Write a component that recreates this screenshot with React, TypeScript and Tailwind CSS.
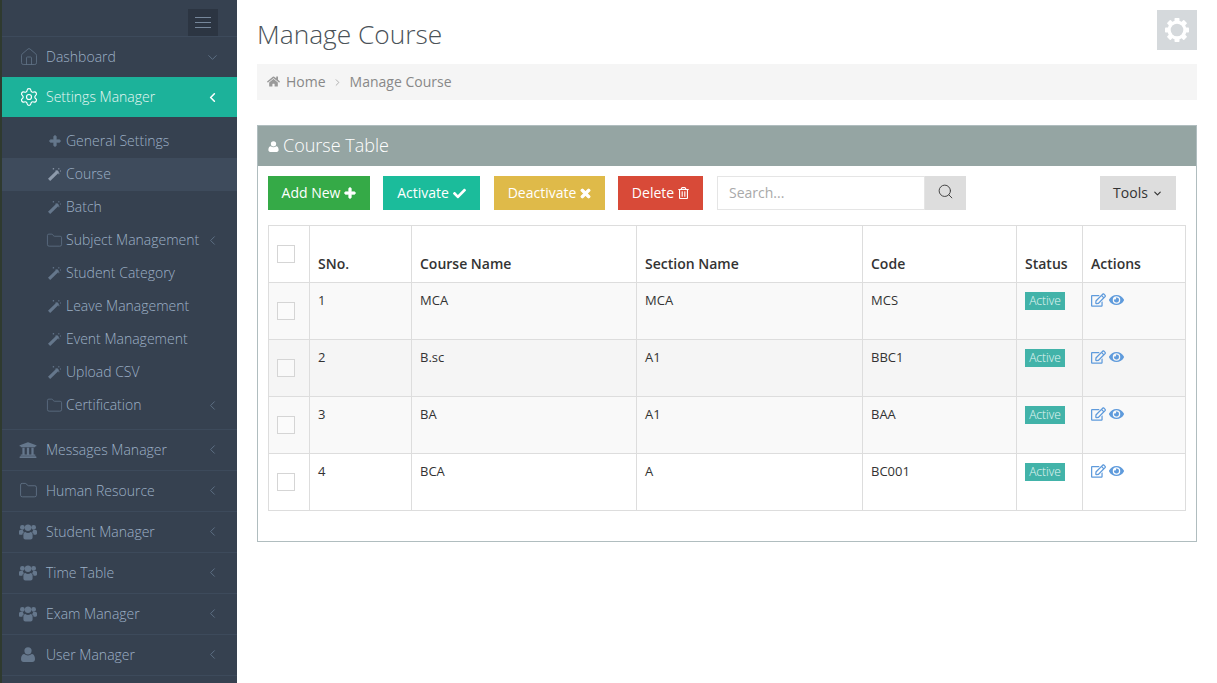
import { ChevronDown, ChevronLeft, ChevronRight, Folder, Home, Search, Settings } from 'lucide-react'
import { FaCheck, FaEye, FaHome, FaPlus, FaRegEdit, FaRegTrashAlt, FaTimes, FaUniversity } from 'react-icons/fa'

function WandIcon({ className }: { className?: string }) {
    return (
        <svg viewBox="0 0 13 13" className={className} fill="currentColor">
            <path d="M0 10.800 9 2 11.200 4.200 2.200 13z" />
            <path d="M10.400 0h.9v1.400h-.9zM10.400 5h.9v1.200h-.9zM12 2.600h1v.9h-1zM7.400 2.600h1.100v.9H7.400zM5 0h.8v1.600H5zM4.600.4h1.600v.8H4.600z" />
        </svg>
    )
}

function GroupIcon({ className }: { className?: string }) {
    return (
        <svg viewBox="0 0 18 16" className={className} fill="currentColor">
            <circle cx="3.400" cy="3.400" r="2.400" />
            <circle cx="14.600" cy="3.400" r="2.400" />
            <circle cx="9" cy="3.800" r="3.200" />
            <path d="M0 7.200C0 6.400.8 6 1.800 6h2c.3 1 .6 1.600 1.200 2.200-1 .5-1.600 1.400-1.600 2.600H1.200C.4 10.800 0 10.200 0 9.400zM18 7.200c0-.8-.8-1.200-1.800-1.200h-2c-.3 1-.6 1.600-1.200 2.200 1 .5 1.600 1.400 1.600 2.600h1.600c.8 0 1.800-.6 1.800-1.400z" />
            <path d="M4.400 10.600c0-1.500.9-2.600 2-2.600.7.6 1.600.9 2.600.9s1.900-.3 2.600-.9c1.100 0 2 1.100 2 2.600v3c0 1.200-.9 1.900-2 1.900H6.400c-1.100 0-2-.7-2-1.900z" />
        </svg>
    )
}

function PersonIcon({ className }: { className?: string }) {
    return (
        <svg viewBox="0 0 14 15" className={className} fill="currentColor">
            <circle cx="7" cy="3.800" r="3.600" />
            <path d="M0 12c0-3 1.300-5 3.300-5 1 .9 2.300 1.400 3.700 1.400S9.700 7.900 10.700 7c2 0 3.300 2 3.300 5 0 1.800-1 3-2.600 3H2.600C1 15 0 13.800 0 12z" />
        </svg>
    )
}

function GearIcon({ className }: { className?: string }) {
    return (
        <svg viewBox="0 0 24 24" className={className} fill="currentColor">
            {[0, 45, 90, 135].map((deg) => (
                <rect key={deg} x="9.500" y="0" width="5" height="24" rx="0.800" transform={`rotate(${deg} 12 12)`} />
            ))}
            <circle cx="12" cy="12" r="9.500" />
            <circle cx="12" cy="12" r="6.300" fill="#d5d9dc" />
        </svg>
    )
}

const subItems = [
    { label: 'General Settings', icon: 'plus' },
    { label: 'Course', icon: 'wand', active: true },
    { label: 'Batch', icon: 'wand' },
    { label: 'Subject Management', icon: 'folder', arrow: true },
    { label: 'Student Category', icon: 'wand' },
    { label: 'Leave Management', icon: 'wand' },
    { label: 'Event Management', icon: 'wand' },
    { label: 'Upload CSV', icon: 'wand' },
    { label: 'Certification', icon: 'folder', arrow: true },
]

const bottomItems = [
    { label: 'Messages Manager', icon: <FaUniversity className="h-[18px] w-[18px]" /> },
    { label: 'Human Resource', icon: <Folder className="h-[19px] w-[19px]" strokeWidth={1} /> },
    { label: 'Student Manager', icon: <GroupIcon className="h-[16px] w-[18px]" /> },
    { label: 'Time Table', icon: <GroupIcon className="h-[16px] w-[18px]" /> },
    { label: 'Exam Manager', icon: <GroupIcon className="h-[16px] w-[18px]" /> },
    { label: 'User Manager', icon: <PersonIcon className="h-[15px] w-[14px]" /> },
]

const rows = [
    { sno: 1, course: 'MCA', section: 'MCA', code: 'MCS', bg: 'bg-[#f9f9f9]' },
    { sno: 2, course: 'B.sc', section: 'A1', code: 'BBC1', bg: 'bg-[#f5f5f5]' },
    { sno: 3, course: 'BA', section: 'A1', code: 'BAA', bg: 'bg-[#f9f9f9]' },
    { sno: 4, course: 'BCA', section: 'A', code: 'BC001', bg: 'bg-white' },
]

function SubIcon({ icon, active }: { icon: string; active?: boolean }) {
    if (icon === 'plus') return <FaPlus className="ml-[1px] h-[12px] w-[12px] text-[#65778c]" stroke="currentColor" strokeWidth={40} />
    if (icon === 'folder') return <Folder className="-ml-[2px] h-[17px] w-[17px] text-[#65778c]" strokeWidth={1} />
    return <WandIcon className={`h-[13px] w-[13px] ${active ? 'text-[#8d9aab]' : 'text-[#65778c]'}`} />
}

function Sidebar() {
    return (
        <aside className="w-[237px] shrink-0 border-l-2 border-[#2f3a2f] bg-[#364150] text-[14px] font-light text-[#9db0c6]">
            <div className="flex h-[37px] justify-end border-b border-[#3d4a5b] pr-[19px] pt-[9px]">
                <div className="flex h-[27px] w-[30px] flex-col items-center justify-center gap-[4px] bg-[#2c3542]">
                    <span className="h-px w-4 bg-[#76879b]" />
                    <span className="h-px w-4 bg-[#76879b]" />
                    <span className="h-px w-4 bg-[#76879b]" />
                </div>
            </div>

            <div className="flex h-10 items-center pl-[17px] pr-[17px]">
                <Home className="h-[20px] w-[20px] shrink-0 text-[#5f7186]" strokeWidth={1} />
                <span className="ml-[7px] flex-1 pb-[2px]">Dashboard</span>
                <ChevronDown className="h-[15px] w-[15px] text-[#5f7186]" strokeWidth={1.5} />
            </div>

            <div className="flex h-10 items-center bg-[#1cb29a] pl-[17px] pr-[17px] font-normal text-[#e6f6f3]">
                <Settings className="h-[20px] w-[20px] shrink-0 text-white" strokeWidth={1.4} />
                <span className="ml-[7px] flex-1 pb-[2px] font-light">Settings Manager</span>
                <ChevronLeft className="h-[15px] w-[15px] text-white" strokeWidth={2.5} />
            </div>

            <ul className="border-b border-[#3d4a5b] pb-[7px] pt-[7.5px]">
                {subItems.map((item) => (
                    <li
                        key={item.label}
                        className={`flex h-[33px] items-center pl-[46px] pr-[17px] ${item.active ? 'bg-[#3e4b5c]' : ''}`}
                    >
                        <span className="flex w-[18px] shrink-0 justify-start">
                            <SubIcon icon={item.icon} active={item.active} />
                        </span>
                        <span className="flex-1 whitespace-nowrap pb-[2px]">{item.label}</span>
                        {item.arrow && <ChevronLeft className="h-[15px] w-[15px] text-[#5f7186]" strokeWidth={1.5} />}
                    </li>
                ))}
            </ul>

            {bottomItems.map((item) => (
                <div key={item.label} className="flex h-[41px] items-center border-b border-[#3d4a5b] pl-[16px] pr-[17px]">
                    <span className="flex w-[20px] shrink-0 justify-center text-[#65778c]">{item.icon}</span>
                    <span className="ml-[8px] flex-1">{item.label}</span>
                    <ChevronLeft className="h-[15px] w-[15px] text-[#5f7186]" strokeWidth={1.5} />
                </div>
            ))}
        </aside>
    )
}

function Toolbar() {
    return (
        <div className="flex h-[34px] items-stretch text-[14px] text-white">
            <button className="flex w-[102px] items-center justify-center gap-1 bg-[#35aa47] pb-[2px]">
                Add New <FaPlus className="mt-[2px] h-[12px] w-[12px]" stroke="currentColor" strokeWidth={40} />
            </button>
            <button className="ml-[13px] flex w-[97px] items-center justify-center gap-1 bg-[#1bbc9b] pb-[2px]">
                Activate <FaCheck className="mt-[2px] h-[13px] w-[13px]" />
            </button>
            <button className="ml-[14px] flex w-[111px] items-center justify-center gap-1 bg-[#dfba49] pb-[2px]">
                Deactivate <FaTimes className="mt-[2px] h-[13px] w-[11px]" stroke="currentColor" strokeWidth={40} />
            </button>
            <button className="ml-[13px] flex w-[85px] items-center justify-center gap-1 bg-[#d84a38] pb-[2px]">
                Delete <FaRegTrashAlt className="mt-[2px] h-[12px] w-[11px]" />
            </button>
            <input
                placeholder="Search..."
                className="ml-[14px] w-[208px] border border-[#e5e5e5] px-[11px] pb-[2px] text-[14px] text-[#333] outline-none placeholder:text-[#a9a9a9]"
            />
            <button className="flex w-[41px] items-center justify-center bg-[#dddddd] pb-[4px] text-[#444]">
                <Search className="h-[17px] w-[17px]" strokeWidth={1.4} />
            </button>
            <button className="ml-auto mr-[20px] flex w-[76px] items-center justify-center gap-1 bg-[#dddddd] pb-[2px] text-[#333]">
                Tools <ChevronDown className="mt-[2px] h-[11px] w-[11px]" strokeWidth={2.5} />
            </button>
        </div>
    )
}

function CourseTable() {
    const cell = 'border border-[#dddddd] px-2 align-top'
    return (
        <table className="w-[917px] table-fixed border-collapse text-[13px] text-[#333]">
            <colgroup>
                <col className="w-[41px]" />
                <col className="w-[102px]" />
                <col className="w-[225px]" />
                <col className="w-[226px]" />
                <col className="w-[154px]" />
                <col className="w-[66px]" />
                <col className="w-[103px]" />
            </colgroup>
            <thead>
                <tr className="h-[57px] text-left text-[14px] font-semibold">
                    <th className="border border-[#dddddd] pb-[8px] pl-2 pt-0 align-top font-semibold">
                        <span className="mt-[19px] block h-[18px] w-[18px] border border-[#d5d5d5]" />
                    </th>
                    {['SNo.', 'Course Name', 'Section Name', 'Code', 'Status', 'Actions'].map((h) => (
                        <th key={h} className="border border-[#dddddd] px-2 pb-[8px] align-bottom font-semibold">
                            {h}
                        </th>
                    ))}
                </tr>
            </thead>
            <tbody>
                {rows.map((row) => (
                    <tr key={row.sno} className={`h-[57px] ${row.bg}`}>
                        <td className={`${cell} pt-[19px]`}>
                            <span className="block h-[18px] w-[18px] border border-[#d5d5d5] bg-white/40" />
                        </td>
                        <td className={`${cell} pt-[8px]`}>{row.sno}</td>
                        <td className={`${cell} pt-[8px]`}>{row.course}</td>
                        <td className={`${cell} pt-[8px]`}>{row.section}</td>
                        <td className={`${cell} pt-[8px]`}>{row.code}</td>
                        <td className={`${cell} pt-[9px]`}>
                            <span className="block h-[18px] w-10 bg-[#42b3a9] text-center text-[12px] font-light leading-[18px] text-[#e4f6f4]">
                                Active
                            </span>
                        </td>
                        <td className={`${cell} pt-[10px]`}>
                            <div className="flex items-center gap-[3px] text-[#5f9bdc]">
                                <FaRegEdit className="h-[14px] w-[15px]" />
                                <FaEye className="h-[14px] w-[15px]" />
                            </div>
                        </td>
                    </tr>
                ))}
            </tbody>
        </table>
    )
}

export default function App() {
    return (
        <div className="flex h-[683px] overflow-hidden bg-white font-['Open_Sans',sans-serif]">
            <Sidebar />

            <main className="flex-1 px-5">
                <div className="flex h-[64px] items-start justify-between">
                    <h1 className="mt-[13px] text-[26.3px] font-light leading-[42px] text-[#4a5258]">Manage Course</h1>
                    <div className="mt-[10px] flex h-10 w-10 items-center justify-center bg-[#d5d9dc] text-white">
                        <GearIcon className="h-[24px] w-[24px]" />
                    </div>
                </div>

                <div className="flex h-9 items-center bg-[#f5f5f5] pb-[2px] pl-[10px] text-[14px] text-[#888]">
                    <FaHome className="mt-[1px] h-[13px] w-[13px] text-[#9a9a9a]" />
                    <span className="ml-[6px]">Home</span>
                    <ChevronRight className="mx-[6px] mt-[2px] h-[11px] w-[11px] text-[#aaa]" strokeWidth={2} />
                    <span className="ml-[1px]">Manage Course</span>
                </div>

                <section className="mt-[25px] h-[417px] border border-[#b0bdbf]">
                    <div className="flex h-10 items-center bg-[#95a5a3] pb-[2px] pl-[10px] text-[18px] font-light text-white">
                        <PersonIcon className="mt-[2px] h-[11px] w-[11px]" />
                        <span className="ml-[4px]">Course Table</span>
                    </div>
                    <div className="pl-[10px] pt-[10px]">
                        <Toolbar />
                        <div className="mt-[15px]">
                            <CourseTable />
                        </div>
                    </div>
                </section>
            </main>
        </div>
    )
}
